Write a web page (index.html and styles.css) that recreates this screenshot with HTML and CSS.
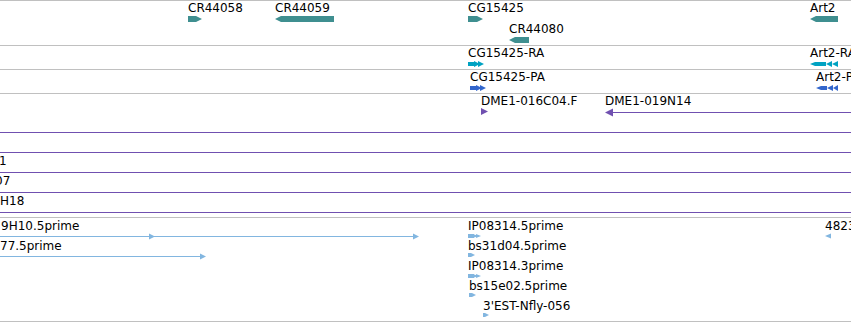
FILE: index.html
```html
<!DOCTYPE html>
<html>
<head>
<meta charset="utf-8">
<title>Tracks</title>
<link rel="stylesheet" href="styles.css">
</head>
<body>
<div class="view">
  <div class="track t-genes">
    <svg class="shapes" width="851" height="44">
      <polygon points="188,15 196,15 202,18 196,21 188,21"/>
      <polygon points="275,18 281,15 334,15 334,21 281,21"/>
      <polygon points="468,15 477,15 483,18 477,21 468,21"/>
      <polygon points="509,39 515,36 529,36 529,42 515,42"/>
      <polygon points="810,18 816,15 838,15 838,21 816,21"/>
    </svg>
    <span class="lbl" style="left:188px;top:0">CR44058</span>
    <span class="lbl" style="left:275px;top:0">CR44059</span>
    <span class="lbl" style="left:468px;top:0">CG15425</span>
    <span class="lbl" style="left:509px;top:21px">CR44080</span>
    <span class="lbl" style="left:810px;top:0">Art2</span>
  </div>
  <div class="track t-tx">
    <svg class="shapes" width="851" height="23">
      <polygon points="468,16 475,16 475,20 468,20"/>
      <polygon points="474,15 480,18 474,21"/>
      <polygon points="478,15 484,18 478,21"/>
      <polygon points="810,18 815,16 826,16 826,20 815,20"/>
      <polygon points="832,15 826,18 832,21"/>
      <polygon points="838,15 832,18 838,21"/>
    </svg>
    <span class="lbl" style="left:468px;top:0">CG15425-RA</span>
    <span class="lbl" style="left:810px;top:0">Art2-RA</span>
  </div>
  <div class="track t-pep">
    <svg class="shapes" width="851" height="23">
      <polygon points="470,16 477,16 477,20 470,20"/>
      <polygon points="476,15 482,18 476,21"/>
      <polygon points="480,15 486,18 480,21"/>
      <polygon points="816,18 821,16 827,16 827,20 821,20"/>
      <polygon points="833,15 827,18 833,21"/>
      <polygon points="838,15 833,18 838,21"/>
    </svg>
    <span class="lbl" style="left:470px;top:0">CG15425-PA</span>
    <span class="lbl" style="left:816px;top:0">Art2-PA</span>
  </div>
  <div class="track t-bac">
    <svg class="shapes" width="851" height="123">
      <polygon points="481,14 488,17.5 481,21"/>
      <polygon points="605,18.5 613,14.5 613,22.5"/>
      <rect x="612" y="18" width="239" height="1"/>
      <rect x="0" y="38" width="851" height="1"/>
      <rect x="0" y="58" width="851" height="1"/>
      <rect x="0" y="78" width="851" height="1"/>
      <rect x="0" y="98" width="851" height="1"/>
      <rect x="0" y="118" width="851" height="1"/>
    </svg>
    <span class="lbl" style="left:481px;top:0">DME1-016C04.F</span>
    <span class="lbl" style="left:605px;top:0">DME1-019N14</span>
    <span class="lbl" style="left:-1px;top:60px">1</span>
    <span class="lbl" style="left:-5px;top:80px">07</span>
    <span class="lbl" style="left:0;top:100px">H18</span>
  </div>
  <div class="track t-est">
    <svg class="shapes" width="851" height="103">
      <rect x="0" y="18" width="416" height="1"/>
      <polygon points="149,15.5 155,18.5 149,21.5"/>
      <polygon points="413,15.5 419,18.5 413,21.5"/>
      <rect x="0" y="38" width="203" height="1"/>
      <polygon points="200,35.5 206,38.5 200,41.5"/>
      <polygon points="468,16 474,16 474,20 468,20"/>
      <polygon points="473,16 478,18 473,20"/>
      <polygon points="476,16 481,18 476,20"/>
      <polygon points="468,35 471,35 475,37 471,39 468,39"/>
      <polygon points="468,56 474,56 474,60 468,60"/>
      <polygon points="473,56 478,58 473,60"/>
      <polygon points="476,56 481,58 476,60"/>
      <polygon points="469,75 472,75 476,77 472,79 469,79"/>
      <polygon points="483,95 485,95 489,97 485,99 483,99"/>
      <polygon points="825,18 831,15.5 831,20.5"/>
    </svg>
    <span class="lbl" style="left:1px;top:1px">9H10.5prime</span>
    <span class="lbl" style="left:0;top:21px">77.5prime</span>
    <span class="lbl" style="left:468px;top:1px">IP08314.5prime</span>
    <span class="lbl" style="left:468px;top:21px">bs31d04.5prime</span>
    <span class="lbl" style="left:468px;top:41px">IP08314.3prime</span>
    <span class="lbl" style="left:469px;top:61px">bs15e02.5prime</span>
    <span class="lbl" style="left:483px;top:81px">3'EST-Nfly-056</span>
    <span class="lbl" style="left:825px;top:1px">4823</span>
  </div>
</div>
</body>
</html>
```
FILE: styles.css
```css
html, body {
  margin: 0;
  padding: 0;
  background: #ffffff;
}
body {
  width: 851px;
  height: 322px;
  overflow: hidden;
  font-family: "DejaVu Sans", "Liberation Sans", sans-serif;
  font-size: 12px;
  line-height: 14px;
  color: #000000;
}
.view {
  display: flex;
  flex-direction: column;
  border-top: 1px solid #c0c0c0;
}
.track {
  position: relative;
  overflow: hidden;
  border-bottom: 1px solid #c0c0c0;
}
.t-genes { height: 44px; }
.t-tx { height: 23px; }
.t-pep { height: 23px; }
.t-bac { height: 123px; }
.t-est { height: 103px; }
.shapes {
  position: absolute;
  top: 0;
  left: 0;
  display: block;
}
.t-genes .shapes { fill: #3f8f90; }
.t-tx .shapes { fill: #00a2c2; }
.t-pep .shapes { fill: #3366cc; }
.t-bac .shapes { fill: #7050b0; }
.t-est .shapes { fill: #82b6e0; }
.lbl {
  position: absolute;
  white-space: nowrap;
}
```
